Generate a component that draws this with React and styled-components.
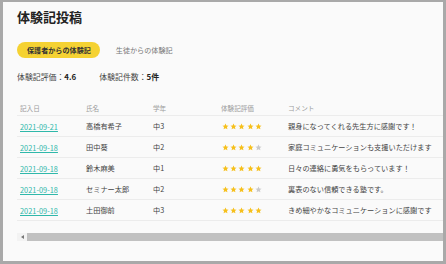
import React from "react";
import styled, { createGlobalStyle } from "styled-components";

const Global = createGlobalStyle`
  html, body { margin: 0; padding: 0; background: #a9a9a9; }
  body { font-family: "Noto Sans CJK JP", "Noto Sans", sans-serif; width: 446px; height: 264px; overflow: hidden; }
  * { box-sizing: border-box; }
`;

const Panel = styled.div`
  margin: 2px 3px 0 3px;
  height: 259px;
  background: #fafafa;
  display: flex;
  flex-direction: column;
  padding-left: 14px;
  overflow: hidden;
`;

const Title = styled.h1`
  margin: 7px 0 0 0;
  font-size: 13px;
  line-height: 16px;
  font-weight: 700;
  color: #222;
`;

const Tabs = styled.div`
  display: flex;
  align-items: center;
  gap: 16px;
  margin-top: 17px;
`;

const Tab = styled.div`
  height: 16px;
  padding: 0 9px 0 10px;
  border-radius: 8px;
  display: flex;
  align-items: center;
  font-size: 7.1px;
  font-weight: ${(p) => (p.$active ? 700 : 400)};
  color: ${(p) => (p.$active ? "#333" : "#777")};
  background: ${(p) => (p.$active ? "#f5d232" : "transparent")};
  padding-left: ${(p) => (p.$active ? "10px" : "0")};
`;

const Stats = styled.div`
  display: flex;
  gap: 23px;
  margin-top: 14px;
  font-size: 7.9px;
  line-height: 10px;
  color: #444;
`;

const Stat = styled.span`
  b { font-weight: 700; color: #222; }
`;

const TableWrap = styled.div`
  margin-top: 18px;
  overflow: hidden;
`;

const Table = styled.div`
  width: 470px;
  display: flex;
  flex-direction: column;
`;

const Row = styled.div`
  display: grid;
  grid-template-columns: 66px 67px 68px 67px 1fr;
  height: ${(p) => (p.$head ? "16px" : "21px")};
  align-items: center;
  border-bottom: 1px solid #ececec;
  color: ${(p) => (p.$head ? "#9a9a9a" : "#444")};
  font-size: ${(p) => (p.$head ? "6.6px" : "7.2px")};
  white-space: nowrap;
`;

const Cell = styled.div`
  padding-left: 3px;
  display: flex;
  align-items: center;
`;

const DateLink = styled.a`
  color: #2fb8aa;
  text-decoration: underline;
  font-size: 7.4px;
`;

const Stars = styled.div`
  display: flex;
  gap: 1.2px;
  padding-left: 1px;
`;

const Star = ({ on }) => (
  <svg width="7" height="7" viewBox="0 0 24 24">
    <path
      d="M12 1.5l3.1 6.9 7.4.7-5.6 5 1.7 7.4L12 17.6l-6.6 3.9 1.7-7.4-5.6-5 7.4-.7z"
      fill={on ? "#f6c01c" : "#c9c9c9"}
    />
  </svg>
);

const ScrollBar = styled.div`
  margin-top: 12px;
  height: 8px;
  display: flex;
  align-items: stretch;
  background: #f3f3f3;
`;

const ScrollButton = styled.div`
  width: 10px;
  display: flex;
  align-items: center;
  justify-content: center;
  &::before {
    content: "";
    border-style: solid;
    border-width: 2px 3px 2px 0;
    border-color: transparent #777 transparent transparent;
  }
`;

const Thumb = styled.div`
  flex: 1;
  background: #c1c1c1;
`;

const rows = [
  ["2021-09-21", "高橋有希子", "中3", 5, "親身になってくれる先生方に感謝です！"],
  ["2021-09-18", "田中葵", "中2", 4, "家庭コミュニケーションも支援いただけます"],
  ["2021-09-18", "鈴木麻美", "中1", 5, "日々の連絡に勇気をもらっています！"],
  ["2021-09-18", "セミナー太郎", "中2", 4, "裏表のない信頼できる塾です。"],
  ["2021-09-18", "土田御前", "中3", 5, "きめ細やかなコミュニケーションに感謝です"],
];

export default function App() {
  return (
    <>
      <Global />
      <Panel>
        <Title>体験記投稿</Title>
        <Tabs>
          <Tab $active>保護者からの体験記</Tab>
          <Tab>生徒からの体験記</Tab>
        </Tabs>
        <Stats>
          <Stat>体験記評価：<b>4.6</b></Stat>
          <Stat>体験記件数：<b>5件</b></Stat>
        </Stats>
        <TableWrap>
          <Table>
            <Row $head>
              <Cell>記入日</Cell>
              <Cell>氏名</Cell>
              <Cell>学年</Cell>
              <Cell>体験記評価</Cell>
              <Cell>コメント</Cell>
            </Row>
            {rows.map((r, i) => (
              <Row key={i}>
                <Cell><DateLink href="#">{r[0]}</DateLink></Cell>
                <Cell>{r[1]}</Cell>
                <Cell>{r[2]}</Cell>
                <Cell>
                  <Stars>
                    {[0, 1, 2, 3, 4].map((k) => (
                      <Star key={k} on={k < r[3]} />
                    ))}
                  </Stars>
                </Cell>
                <Cell>{r[4]}</Cell>
              </Row>
            ))}
          </Table>
        </TableWrap>
        <ScrollBar>
          <ScrollButton />
          <Thumb />
        </ScrollBar>
      </Panel>
    </>
  );
}
